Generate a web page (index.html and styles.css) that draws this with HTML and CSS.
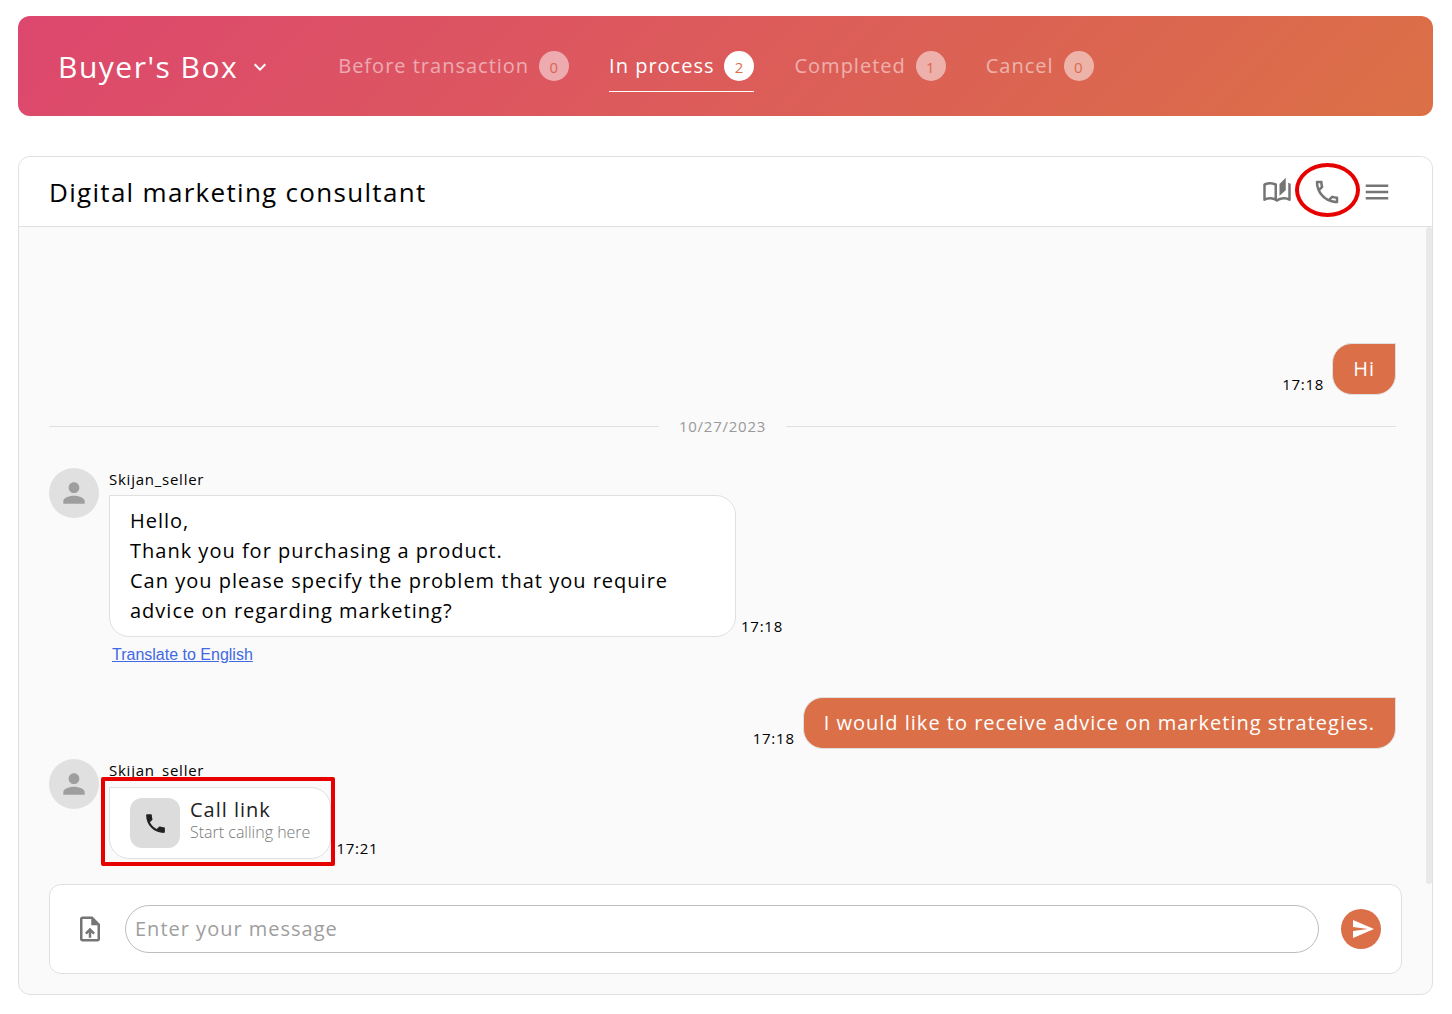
FILE: index.html
```html
<!DOCTYPE html>
<html lang="en">
<head>
<meta charset="utf-8">
<meta name="viewport" content="width=device-width, initial-scale=1">
<title>Buyer's Box</title>
<link rel="stylesheet" href="styles.css">
</head>
<body>
<header class="box-bar">
  <button class="box-switch" type="button">Buyer's Box
    <svg class="icon-24" viewBox="0 0 24 24" aria-hidden="true"><path d="M16.59 8.59L12 13.17 7.41 8.59 6 10l6 6 6-6z"/></svg>
  </button>
  <nav class="tabs">
    <a class="tab" href="#before">Before transaction <span class="badge">0</span></a>
    <a class="tab tab-active" href="#process">In process <span class="badge">2</span></a>
    <a class="tab" href="#completed">Completed <span class="badge">1</span></a>
    <a class="tab" href="#cancel">Cancel <span class="badge">0</span></a>
  </nav>
</header>

<main class="chat">
  <div class="chat-head">
    <h1 class="chat-title">Digital marketing consultant</h1>
    <div class="chat-tools">
      <button class="tool" type="button" aria-label="Guide"><svg class="icon-30" viewBox="0 0 24 24"><path d="M22.47 5.2c-.47-.24-.96-.44-1.47-.61v12.03c-1.14-.41-2.31-.62-3.5-.62-1.9 0-3.78.54-5.5 1.58V5.48C10.38 4.55 8.51 4 6.5 4c-1.79 0-3.48.44-4.97 1.2-.33.16-.53.51-.53.88v12.08c0 .58.47.99 1 .99.16 0 .32-.04.48-.12C3.69 18.4 5.05 18 6.5 18c2.07 0 3.98.82 5.5 2 1.52-1.18 3.43-2 5.5-2 1.45 0 2.81.4 4.02 1.04.16.08.32.12.48.12.52 0 1-.41 1-.99V6.08c0-.37-.2-.72-.53-.88zM10 16.62C8.86 16.21 7.69 16 6.5 16s-2.36.21-3.5.62V6.71C4.11 6.24 5.28 6 6.5 6c1.2 0 2.39.25 3.5.72v9.9zM19 .5l-5 5V15l5-4.5V.5z"/></svg></button>
      <button class="tool tool-marked" type="button" aria-label="Call"><svg class="icon-30" viewBox="0 0 24 24"><path d="M6.54 5c.06.89.21 1.76.45 2.59l-1.2 1.2c-.41-1.2-.67-2.47-.76-3.79h1.51m9.86 12.02c.85.24 1.72.39 2.6.45v1.49c-1.32-.09-2.59-.35-3.8-.75l1.2-1.19M7.5 3H4c-.55 0-1 .45-1 1 0 9.39 7.61 17 17 17 .55 0 1-.45 1-1v-3.49c0-.55-.45-1-1-1-1.24 0-2.45-.2-3.57-.57-.1-.04-.21-.05-.31-.05-.26 0-.51.1-.71.29l-2.2 2.2c-2.83-1.45-5.15-3.76-6.59-6.59l2.2-2.2c.28-.28.36-.67.25-1.02C8.7 6.45 8.5 5.25 8.5 4c0-.55-.45-1-1-1z"/></svg></button>
      <button class="tool" type="button" aria-label="Menu"><svg class="icon-30" viewBox="0 0 24 24"><path d="M3 18h18v-2H3v2zm0-5h18v-2H3v2zm0-7v2h18V6H3z"/></svg></button>
    </div>
  </div>

  <div class="chat-log">
    <div class="messages">
      <div class="sent">
        <time class="time">17:18</time>
        <p class="bubble bubble-sent">Hi</p>
      </div>

      <div class="day">10/27/2023</div>

      <article class="received">
        <span class="avatar"><svg class="icon-32" viewBox="0 0 24 24" aria-hidden="true"><path d="M12 12c2.21 0 4-1.79 4-4s-1.79-4-4-4-4 1.79-4 4 1.79 4 4 4zm0 2c-2.67 0-8 1.34-8 4v2h16v-2c0-2.66-5.33-4-8-4z"/></svg></span>
        <div class="received-body">
          <span class="sender">Skijan_seller</span>
          <div class="received-line">
            <p class="bubble bubble-text">Hello,<br>Thank you for purchasing a product.<br>Can you please specify the problem that you require advice on regarding marketing?</p>
            <time class="time">17:18</time>
          </div>
          <a class="translate" href="#translate">Translate to English</a>
        </div>
      </article>

      <div class="sent sent-reply">
        <time class="time">17:18</time>
        <p class="bubble bubble-sent">I would like to receive advice on marketing strategies.</p>
      </div>

      <article class="received received-call">
        <span class="avatar"><svg class="icon-32" viewBox="0 0 24 24" aria-hidden="true"><path d="M12 12c2.21 0 4-1.79 4-4s-1.79-4-4-4-4 1.79-4 4 1.79 4 4 4zm0 2c-2.67 0-8 1.34-8 4v2h16v-2c0-2.66-5.33-4-8-4z"/></svg></span>
        <div class="received-body">
          <span class="sender">Skijan_seller</span>
          <div class="received-line">
            <a class="bubble bubble-call" href="#call">
              <span class="call-icon"><svg class="icon-25" viewBox="0 0 24 24" aria-hidden="true"><path d="M6.62 10.79c1.44 2.83 3.76 5.14 6.59 6.59l2.2-2.2c.27-.27.67-.36 1.02-.24 1.12.37 2.33.57 3.57.57.55 0 1 .45 1 1V20c0 .55-.45 1-1 1-9.39 0-17-7.61-17-17 0-.55.45-1 1-1h3.5c.55 0 1 .45 1 1 0 1.25.2 2.45.57 3.57.11.35.03.74-.25 1.02l-2.2 2.2z"/></svg></span>
              <span class="call-text">
                <span class="call-title">Call link</span>
                <span class="call-note">Start calling here</span>
              </span>
            </a>
            <time class="time">17:21</time>
          </div>
        </div>
      </article>
    </div>
    <div class="scroll-thumb"></div>
  </div>

  <form class="composer">
    <button class="attach" type="button" aria-label="Attach a file"><svg class="icon-30" viewBox="0 0 24 24"><path d="M14 2H6c-1.1 0-1.99.9-1.99 2L4 20c0 1.1.89 2 1.99 2H18c1.1 0 2-.9 2-2V8l-6-6zm4 18H6V4h7v5h5v11zM8 15.01l1.41 1.41L11 14.84V19h2v-4.16l1.59 1.59L16 15.01 12.01 11 8 15.01z"/></svg></button>
    <input class="message-input" type="text" placeholder="Enter your message" aria-label="Message">
    <button class="send" type="submit" aria-label="Send"><svg class="icon-24" viewBox="0 0 24 24"><path d="M2.01 21L23 12 2.01 3 2 10l15 2-15 2z"/></svg></button>
  </form>
</main>
</body>
</html>
```
FILE: styles.css
```css
:root {
  --orange: #db7048;
  --line: #e0e0e0;
  --icon: #757575;
  --mark: #e60000;
  --surface: #fafafa;
}

* {
  box-sizing: border-box;
  letter-spacing: 0.05em;
}

body {
  margin: 0;
  padding: 16px 19px 19px 18px;
  background: #fff;
  color: #000;
  font-family: "Open Sans", sans-serif;
  font-size: 20px;
  line-height: 30px;
}

button, input {
  margin: 0;
  padding: 0;
  border: 0;
  background: none;
  color: inherit;
  font: inherit;
}

p, h1 { margin: 0; }
a { color: inherit; text-decoration: none; }
svg { display: block; flex: none; fill: currentColor; }

.icon-24 { width: 24px; height: 24px; }
.icon-25 { width: 25px; height: 25px; }
.icon-30 { width: 30px; height: 30px; }
.icon-32 { width: 32px; height: 32px; }

/* Top bar */
.box-bar {
  display: flex;
  align-items: center;
  gap: 66px;
  min-height: 100px;
  padding: 0 40px;
  border-radius: 12px;
  background: linear-gradient(135deg, #dd476e, #db7046);
  color: #fff;
}

.box-switch {
  display: flex;
  align-items: center;
  gap: 10px;
  padding-top: 2px;
  font-size: 30px;
  line-height: 40px;
}

.tabs { display: flex; gap: 40px; }

.tab {
  display: flex;
  align-items: center;
  gap: 10px;
  padding: 10px 0;
  border-bottom: 1px solid transparent;
  opacity: 0.5;
}

.tab-active { border-color: #fff; opacity: 1; }

.badge {
  width: 30px;
  height: 30px;
  border-radius: 50%;
  background: #fff;
  color: var(--orange);
  font-size: 15px;
  line-height: 32px;
  text-align: center;
}

/* Chat card */
.chat {
  margin-top: 40px;
  padding-bottom: 20px;
  border: 1px solid var(--line);
  border-radius: 12px;
  background: var(--surface);
}

.chat-head {
  display: flex;
  align-items: center;
  justify-content: space-between;
  min-height: 70px;
  padding: 0 30px;
  border-bottom: 1px solid var(--line);
  border-radius: 12px 12px 0 0;
  background: #fff;
}

.chat-title { font-size: 26px; font-weight: 400; }
.chat-tools { display: flex; color: var(--icon); }

.tool {
  position: relative;
  display: grid;
  place-items: center;
  width: 50px;
  height: 50px;
}

.tool-marked::after {
  content: "";
  position: absolute;
  inset: -4px -8px 0 -7px;
  border: 4px solid var(--mark);
  border-radius: 50%;
}

.chat-log { display: flex; }

.messages {
  flex: 1;
  padding: 116px 30px 25px;
}

.scroll-thumb {
  width: 6px;
  border-radius: 3px;
  background: #e9e9e9;
}

.time, .sender, .day { font-size: 15px; line-height: 20px; }
.time { line-height: 22px; }

.bubble {
  padding: 10px 20px;
  border: 1px solid var(--line);
  border-radius: 20px;
}

.sent {
  display: flex;
  align-items: flex-end;
  justify-content: flex-end;
  gap: 8px;
}

.sent-reply { margin-top: 30px; }

.bubble-sent {
  border-top-right-radius: 0;
  background: var(--orange);
  color: #fff;
}

.day {
  display: flex;
  align-items: center;
  gap: 20px;
  margin: 21px 0 32px;
  color: #999;
}

.day::before, .day::after {
  content: "";
  flex: 1;
  height: 1px;
  background: var(--line);
}

.received { display: flex; gap: 10px; }
.received-call { margin-top: 10px; }

.avatar {
  display: grid;
  place-items: center;
  flex: none;
  width: 50px;
  height: 50px;
  border-radius: 50%;
  background: #e0e0e0;
  color: #9e9e9e;
}

.received-body {
  display: flex;
  flex: 1;
  flex-direction: column;
  align-items: flex-start;
}

.sender { margin: 1px 0 6px; }

.received-line {
  display: flex;
  align-items: flex-end;
  gap: 5px;
}

.bubble-text {
  max-width: 627px;
  border-top-left-radius: 0;
  background: #fff;
}

.translate {
  margin: 5px 0 0 3px;
  color: #4169e1;
  font-family: "Liberation Sans", Arial, sans-serif;
  font-size: 16px;
  line-height: 25px;
  letter-spacing: normal;
  text-decoration: underline;
}

.bubble-call {
  position: relative;
  display: flex;
  gap: 10px;
  margin-top: 1px;
  border-top-left-radius: 0;
  background: #fff;
  color: #222;
}

.bubble-call::after {
  content: "";
  position: absolute;
  inset: -11px -5px -8px -9px;
  border: 4px solid var(--mark);
  border-radius: 2px;
}

.call-icon {
  display: grid;
  place-items: center;
  width: 50px;
  height: 50px;
  border-radius: 12px;
  background: #dcdcdc;
}

.call-text { display: flex; flex-direction: column; }

.call-title {
  font-weight: 500;
  line-height: 24px;
}

.call-note {
  color: #777;
  font-size: 16px;
  font-weight: 300;
  line-height: 20px;
  letter-spacing: normal;
}

/* Composer */
.composer {
  display: flex;
  align-items: center;
  min-height: 90px;
  margin: 0 30px;
  padding: 0 20px;
  border: 1px solid var(--line);
  border-radius: 12px;
  background: #fff;
}

.attach {
  display: grid;
  place-items: center;
  width: 40px;
  height: 40px;
  color: var(--icon);
}

.message-input {
  flex: 1;
  min-width: 0;
  height: 48px;
  margin: 0 22px 0 15px;
  padding: 0 9px 2px;
  border: 1px solid #bdbdbd;
  border-radius: 24px;
}

.message-input::placeholder { color: #9e9e9e; opacity: 1; }

.send {
  display: grid;
  place-items: center;
  width: 40px;
  height: 40px;
  padding-left: 3px;
  border-radius: 50%;
  background: var(--orange);
  color: #fff;
}
```
